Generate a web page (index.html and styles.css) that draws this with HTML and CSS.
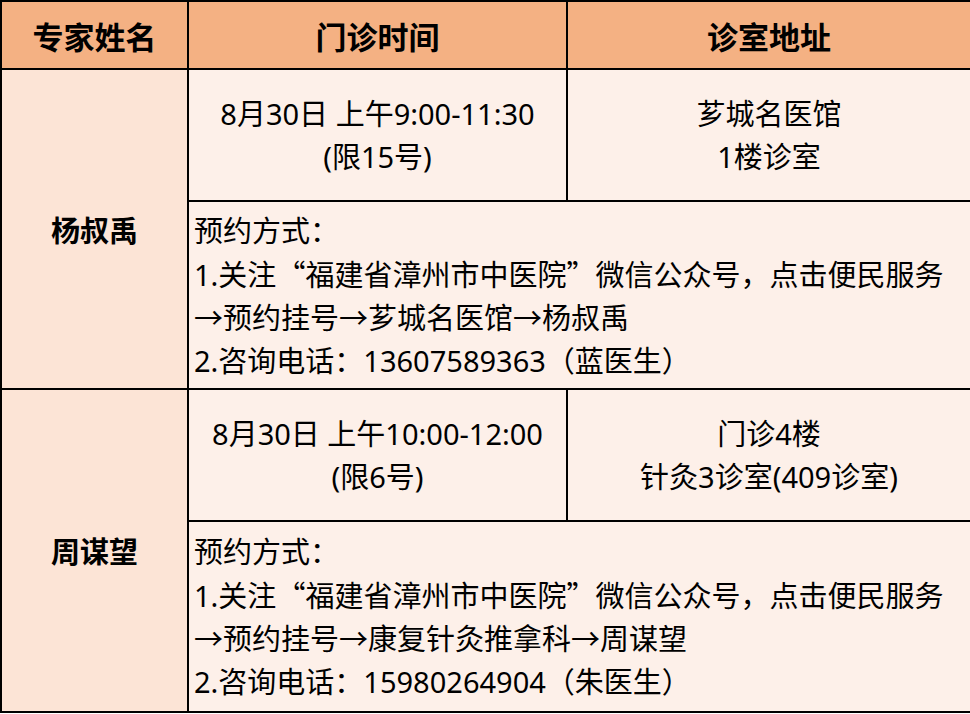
FILE: index.html
```html
<!DOCTYPE html>
<html lang="zh-CN">
<head>
<meta charset="utf-8">
<link rel="stylesheet" href="styles.css">
</head>
<body>
<table class="sched">
  <colgroup>
    <col class="c-name">
    <col class="c-time">
    <col class="c-addr">
  </colgroup>
  <tr class="head">
    <th>专家姓名</th>
    <th>门诊时间</th>
    <th>诊室地址</th>
  </tr>
  <tr class="slot">
    <td class="name" rowspan="2">杨叔禹</td>
    <td class="center">8月30日 上午9:00-11:30<br>(限15号)</td>
    <td class="center">芗城名医馆<br>1楼诊室</td>
  </tr>
  <tr class="note note1">
    <td colspan="2">预约方式：<br>1.关注<span class="q">“</span>福建省漳州市中医院<span class="q">”</span>微信公众号，点击便民服务<br>→预约挂号→芗城名医馆→杨叔禹<br>2.咨询电话：13607589363（蓝医生）</td>
  </tr>
  <tr class="slot">
    <td class="name" rowspan="2">周谋望</td>
    <td class="center">8月30日 上午10:00-12:00<br>(限6号)</td>
    <td class="center">门诊4楼<br>针灸3诊室(409诊室)</td>
  </tr>
  <tr class="note note2">
    <td colspan="2">预约方式：<br>1.关注<span class="q">“</span>福建省漳州市中医院<span class="q">”</span>微信公众号，点击便民服务<br>→预约挂号→康复针灸推拿科→周谋望<br>2.咨询电话：15980264904（朱医生）</td>
  </tr>
</table>
</body>
</html>
```
FILE: styles.css
```css
html, body {
  margin: 0;
  padding: 0;
  background: #ffffff;
}
body {
  font-family: "Noto Sans", "Noto Sans CJK SC", sans-serif;
  color: #000;
}
.sched {
  border-collapse: collapse;
  table-layout: fixed;
  width: 970px;
}
.c-name { width: 187px; }
.c-time { width: 379px; }
.c-addr { width: 404px; }
.sched th,
.sched td {
  border: 2px solid #000;
  padding: 0;
  font-size: 29px;
  line-height: 43px;
  white-space: nowrap;
  background: #fdf0e9;
}
.head th {
  height: 66px;
  background: #f4b183;
  font-family: "Noto Sans CJK SC", sans-serif;
  font-size: 31px;
  font-weight: 700;
  text-align: center;
}
.slot td { height: 130px; }
.note1 td { height: 186px; }
.note2 td { height: 189px; }
.center { text-align: center; }
.sched td.name {
  background: #fce4d6;
  font-family: "Noto Sans CJK SC", sans-serif;
  text-align: center;
  font-weight: 700;
}
.q {
  font-family: "Noto Sans CJK SC", sans-serif;
}
.note td {
  padding-left: 5px;
  text-align: left;
}
```
